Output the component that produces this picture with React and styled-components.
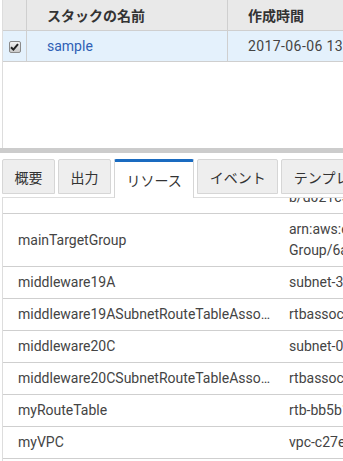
import React, { useLayoutEffect, useRef } from "react";
import styled, { createGlobalStyle } from "styled-components";

const Global = createGlobalStyle`
  html, body { margin: 0; padding: 0; background: #fff; overflow: hidden; }
  body { font-family: Roboto, "Noto Sans CJK JP", sans-serif; font-size: 14px; color: #444; }
  * { box-sizing: border-box; }
`;

const Page = styled.div`
  width: 640px;
  height: 461px;
  display: flex;
  flex-direction: column;
`;

const TopPanel = styled.div`
  margin-left: 2px;
  border-left: 1px solid #ddd;
  height: 148px;
`;

const GridRow = styled.div`
  display: grid;
  grid-template-columns: 24px 201px 1fr;
  height: 31px;
  border-bottom: 1px solid #cfcfcf;
  background: ${(p) => (p.$head ? "#e9e9e9" : p.$selected ? "#e4f1fc" : "#fff")};
`;

const Cell = styled.div`
  display: flex;
  align-items: center;
  padding-left: ${(p) => (p.$check ? "0" : "20px")};
  justify-content: ${(p) => (p.$check ? "center" : "flex-start")};
  border-right: ${(p) => (p.$last ? "none" : "1px solid #cfcfcf")};
  font-family: ${(p) => (p.$head ? '"Noto Sans CJK JP", sans-serif' : 'Roboto, "Noto Sans CJK JP", sans-serif')};
  font-weight: ${(p) => (p.$head ? 700 : 400)};
  color: ${(p) => (p.$head ? "#333" : p.$link ? "#2f5fb5" : "#444")};
  font-size: 14px;
  letter-spacing: ${(p) => (p.$date ? "0.4px" : "normal")};
  white-space: nowrap;
`;

const Check = styled.span`
  width: 12px;
  height: 12px;
  border: 1px solid #8a8a8a;
  border-radius: 2px;
  background: linear-gradient(#f2f2f2, #c9c9c9);
  display: flex;
  align-items: center;
  justify-content: center;
  margin-top: 1px;
`;

const Divider = styled.div`
  height: 5px;
  background: #cccccc;
`;

const TabBar = styled.div`
  margin-top: 6px;
  margin-left: 2px;
  height: 39px;
  display: flex;
  align-items: flex-start;
  gap: 3px;
  border-bottom: 1px solid #ddd;
`;

const Tab = styled.div`
  flex: none;
  height: ${(p) => (p.$active ? "39px" : "35px")};
  padding: 0 11.5px;
  display: flex;
  align-items: center;
  justify-content: center;
  background: ${(p) => (p.$active ? "#fff" : "#eeeeee")};
  border: 1px solid #d6d6d6;
  border-top: ${(p) => (p.$active ? "3px solid #1a6bc0" : "1px solid #d6d6d6")};
  border-bottom: ${(p) => (p.$active ? "none" : "1px solid #d6d6d6")};
  border-radius: 2px 2px 0 0;
  font-family: "Noto Sans CJK JP", sans-serif;
  font-size: 14px;
  color: #333;
  white-space: nowrap;
`;

const Panel = styled.div`
  margin-left: 2px;
  border-left: 1px solid #ddd;
  flex: 1;
  overflow: hidden;
`;

const ResRow = styled.div`
  display: grid;
  grid-template-columns: 270px 1fr;
  border-bottom: 1px solid #cfcfcf;
  padding: 5px 0;
  line-height: 21px;
`;

const NameCell = styled.div`
  padding-left: 15px;
  align-self: center;
  white-space: nowrap;
  overflow: hidden;
  text-overflow: ellipsis;
  color: #444;
  font-family: Roboto, sans-serif;
`;

const ValueCell = styled.div`
  padding-left: 16px;
  white-space: nowrap;
  color: #444;
  font-family: Roboto, sans-serif;
`;

const resources = [
  { name: "mainLoadBalancer", value: ["arn:aws:elasticloadbalancing:ap-northeast-1:loadbalancer/app/sample-AL", "b/d021c5e8a7f39b12"] },
  { name: "mainTargetGroup", value: ["arn:aws:elasticloadbalancing:ap-northeast-1:targetgroup/main-Target", "Group/6a1e2f3b4c5d6e7f"] },
  { name: "middleware19A", value: ["subnet-3a9f1c2d"] },
  { name: "middleware19ASubnetRouteTableAssociation", value: ["rtbassoc-4f8e2a1b"] },
  { name: "middleware20C", value: ["subnet-0c7d2e5f"] },
  { name: "middleware20CSubnetRouteTableAssociation", value: ["rtbassoc-7b3c9d0e"] },
  { name: "myRouteTable", value: ["rtb-bb5b1a2c"] },
  { name: "myVPC", value: ["vpc-c27e3f4a"] },
  { name: "publicSubnet", value: ["subnet-1d2e3f4a"] },
];

const tabs = ["概要", "出力", "リソース", "イベント", "テンプレート", "パラメータ"];

export default function App() {
  const panelRef = useRef(null);
  useLayoutEffect(() => {
    if (panelRef.current) panelRef.current.scrollTop = 37;
  }, []);
  return (
    <>
      <Global />
      <Page>
        <TopPanel>
          <GridRow $head>
            <Cell $check />
            <Cell $head>スタックの名前</Cell>
            <Cell $head $last>作成時間</Cell>
          </GridRow>
          <GridRow $selected>
            <Cell $check>
              <Check>
                <svg width="9" height="8" viewBox="0 0 9 8">
                  <path d="M1 4.2 L3.4 6.6 L8 1.2" fill="none" stroke="#222" strokeWidth="2" />
                </svg>
              </Check>
            </Cell>
            <Cell $link>sample</Cell>
            <Cell $last $date>2017-06-06 13:42:17 UTC+0900</Cell>
          </GridRow>
        </TopPanel>
        <Divider />
        <TabBar>
          {tabs.map((t) => (
            <Tab key={t} $active={t === "リソース"}>{t}</Tab>
          ))}
        </TabBar>
        <Panel ref={panelRef}>
          {resources.map((r) => (
            <ResRow key={r.name}>
              <NameCell>{r.name}</NameCell>
              <ValueCell>
                {r.value.map((v) => (
                  <div key={v}>{v}</div>
                ))}
              </ValueCell>
            </ResRow>
          ))}
        </Panel>
      </Page>
    </>
  );
}
